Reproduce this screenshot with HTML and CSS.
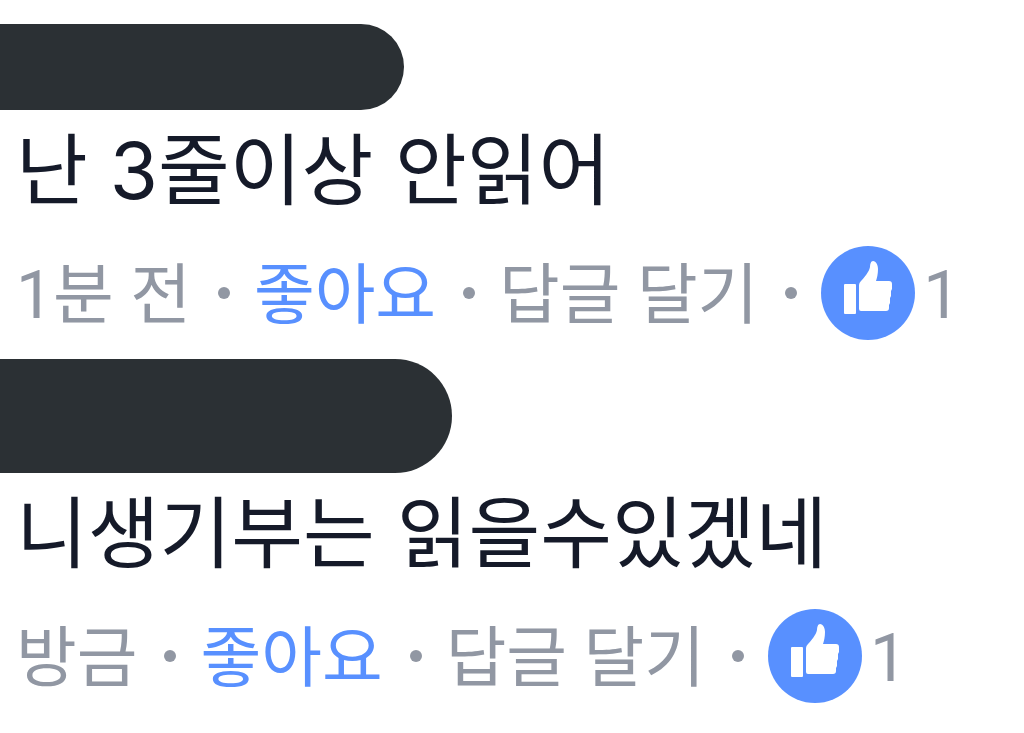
FILE: index.html
```html
<!DOCTYPE html>
<html lang="ko">

<head>
  <meta charset="UTF-8">
  <meta name="viewport" content="width=device-width, initial-scale=1.0">
  <title>댓글</title>
  <link rel="stylesheet" href="styles.css">
</head>

<body>
  <svg class="hidden" aria-hidden="true">
    <symbol id="thumb" viewBox="0 0 94 94">
      <circle cx="47" cy="47" r="47" fill="#5890ff" />
      <path fill="#fff" d="M24 38h10q1 0 1 1v28q0 1-1 1H24q-1 0-1-1V39q0-1 1-1z" />
      <path fill="#fff" d="M38 39q0-2 2-4c3-3 8-9 9-14c0-3 1-6 3-6c3 0 5 4 5 8c0 5-1 9-2 12h13q3 0 3 3v5l-1 2v5l-1 2v5l-1 2v3q0 3-3 3H40q-2 0-2-2z" />
    </symbol>
  </svg>

  <main class="comments">
    <article class="comment">
      <div class="name"></div>
      <p class="text">난 3줄이상 안읽어</p>
      <div class="meta">
        <span class="label">1분 전</span>
        <span class="dot"></span>
        <button class="label like" type="button">좋아요</button>
        <span class="dot"></span>
        <button class="label" type="button">답글 달기</button>
        <span class="dot"></span>
        <a class="likes" href="#" aria-label="좋아요 1"><svg class="thumb"><use href="#thumb" /></svg><span class="label">1</span></a>
      </div>
    </article>

    <article class="comment">
      <div class="name name-large"></div>
      <p class="text">니생기부는 읽을수있겠네</p>
      <div class="meta">
        <span class="label">방금</span>
        <span class="dot"></span>
        <button class="label like" type="button">좋아요</button>
        <span class="dot"></span>
        <button class="label" type="button">답글 달기</button>
        <span class="dot"></span>
        <a class="likes" href="#" aria-label="좋아요 1"><svg class="thumb"><use href="#thumb" /></svg><span class="label">1</span></a>
      </div>
    </article>
  </main>
</body>

</html>
```
FILE: styles.css
```css
* {
  margin: 0;
  padding: 0;
  box-sizing: border-box;
}

body {
  font-family: Inter, "Noto Sans CJK KR", sans-serif;
  background-color: #fff;
  color: #151a29;
}

.hidden {
  display: none;
}

.comments {
  padding-top: 24px;
}

.comment {
  margin-bottom: 19px;
}

.name {
  width: 404px;
  max-width: 100%;
  height: 86px;
  border-radius: 0 43px 43px 0;
  background-color: #2b3034;
}

.name-large {
  width: 452px;
  height: 114px;
  border-radius: 0 57px 57px 0;
}

.text {
  padding: 0 16px;
  font-size: 78px;
  font-weight: 400;
  line-height: 122px;
  white-space: nowrap;
}

.meta {
  display: flex;
  align-items: center;
  margin-top: 14px;
  padding-left: 16px;
  font-family: Roboto, "Noto Sans CJK KR", sans-serif;
  font-size: 66px;
  font-weight: 400;
  line-height: 80px;
  color: #9197a3;
  white-space: nowrap;
}

.meta button {
  border: 0;
  background: none;
  font: inherit;
  color: inherit;
  cursor: pointer;
}

.meta .label {
  padding-top: 6px;
}

.meta .like {
  color: #5890ff;
}

.dot {
  width: 12px;
  height: 12px;
  margin: 0 24px 0 27px;
  border-radius: 50%;
  background-color: #9197a3;
}

.likes {
  display: flex;
  align-items: center;
  gap: 8px;
  color: inherit;
  text-decoration: none;
}

.thumb {
  width: 94px;
  height: 94px;
}
```
